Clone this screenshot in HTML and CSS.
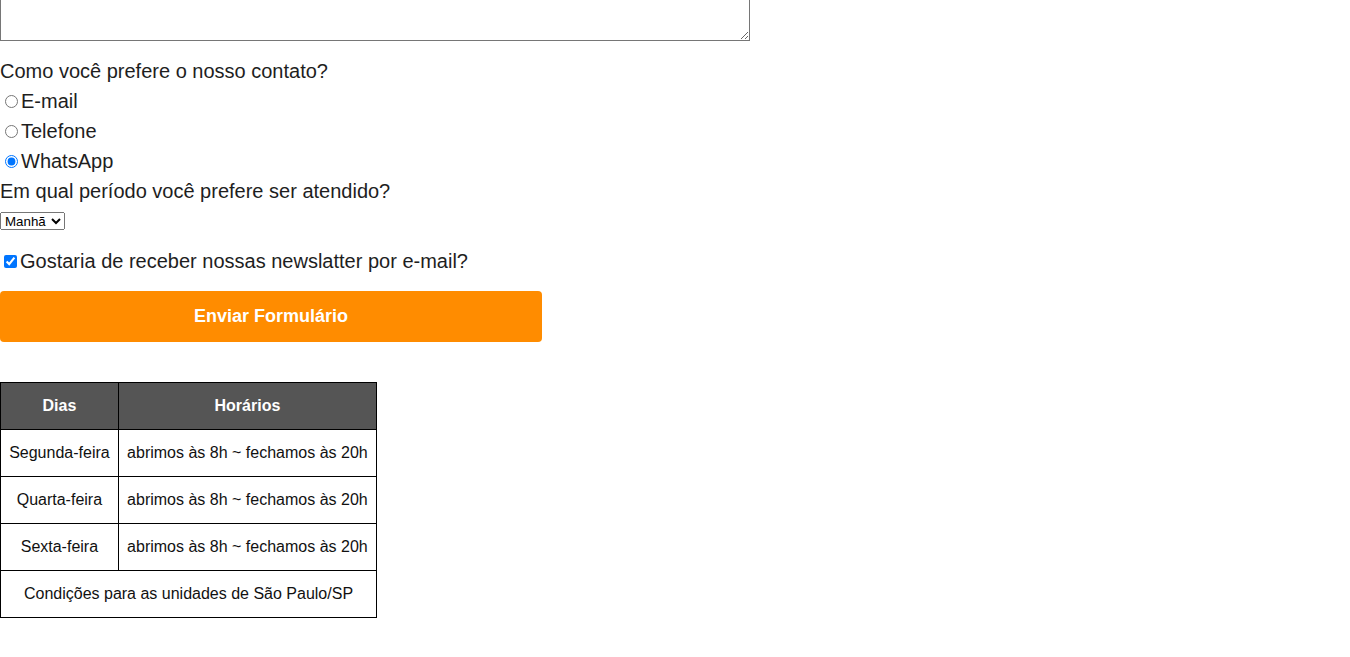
FILE: index.html
```html
<!DOCTYPE html>
<html lang="pt-BR">
<head>
<meta charset="utf-8">
<title>Formulário</title>
<link rel="stylesheet" href="styles.css">
</head>
<body>
<form class="form">
  <textarea class="message" name="mensagem"></textarea>
  <div class="question">Como você prefere o nosso contato?</div>
  <label class="option"><input type="radio" name="contato" value="email">E-mail</label>
  <label class="option"><input type="radio" name="contato" value="telefone">Telefone</label>
  <label class="option"><input type="radio" name="contato" value="whatsapp" checked>WhatsApp</label>
  <div class="question">Em qual período você prefere ser atendido?</div>
  <div class="select-row">
    <select class="period" name="periodo">
      <option>Manhã</option>
      <option>Tarde</option>
      <option>Noite</option>
    </select>
  </div>
  <label class="option check"><input type="checkbox" name="newsletter" checked>Gostaria de receber nossas newslatter por e-mail?</label>
  <button type="button" class="submit">Enviar Formulário</button>
</form>
<table class="hours">
  <thead>
    <tr><th>Dias</th><th>Horários</th></tr>
  </thead>
  <tbody>
    <tr><td>Segunda-feira</td><td>abrimos às 8h ~ fechamos às 20h</td></tr>
    <tr><td>Quarta-feira</td><td>abrimos às 8h ~ fechamos às 20h</td></tr>
    <tr><td>Sexta-feira</td><td>abrimos às 8h ~ fechamos às 20h</td></tr>
  </tbody>
  <tfoot>
    <tr><td colspan="2">Condições para as unidades de São Paulo/SP</td></tr>
  </tfoot>
</table>
</body>
</html>
```
FILE: styles.css
```css
html, body {
  margin: 0;
  padding: 0;
  background: #fff;
}
body {
  font-family: Arial, "Liberation Sans", sans-serif;
  color: #1e1e1e;
  overflow: hidden;
}
.form {
  display: flex;
  flex-direction: column;
  align-items: flex-start;
}
.message {
  display: block;
  box-sizing: border-box;
  width: 750px;
  height: 61px;
  margin: -20px 0 0 0;
  border: 1px solid #767676;
  resize: both;
}
.question {
  font-size: 20px;
  line-height: 30px;
}
.question:first-of-type {
  margin-top: 15px;
}
.option {
  display: flex;
  align-items: center;
  font-size: 20px;
  line-height: 30px;
}
.option input[type="radio"] {
  margin: 0 3px 0 5px;
  width: 13px;
  height: 13px;
}
.select-row {
  margin-top: 6px;
  height: 18px;
}
.period {
  box-sizing: border-box;
  font-family: Arial, "Liberation Sans", sans-serif;
  font-size: 13.33px;
  width: 65px;
  height: 18px;
  color: #000;
}
.check {
  margin-top: 16px;
}
.check input[type="checkbox"] {
  margin: 0 3px 0 4px;
  width: 13px;
  height: 13px;
}
.submit {
  margin-top: 15px;
  width: 542px;
  height: 51px;
  border: none;
  border-radius: 4px;
  background: #ff8c00;
  color: #fff;
  font-family: Arial, "Liberation Sans", sans-serif;
  font-size: 18px;
  font-weight: bold;
}
.hours {
  margin-top: 40px;
  width: 377px;
  border-collapse: collapse;
  font-size: 16px;
  color: #111;
}
.hours th,
.hours td {
  border: 1px solid #000;
  padding: 14px 8px;
  line-height: 18px;
  text-align: center;
}
.hours th {
  background: #555;
  color: #fff;
  font-weight: bold;
}
```
